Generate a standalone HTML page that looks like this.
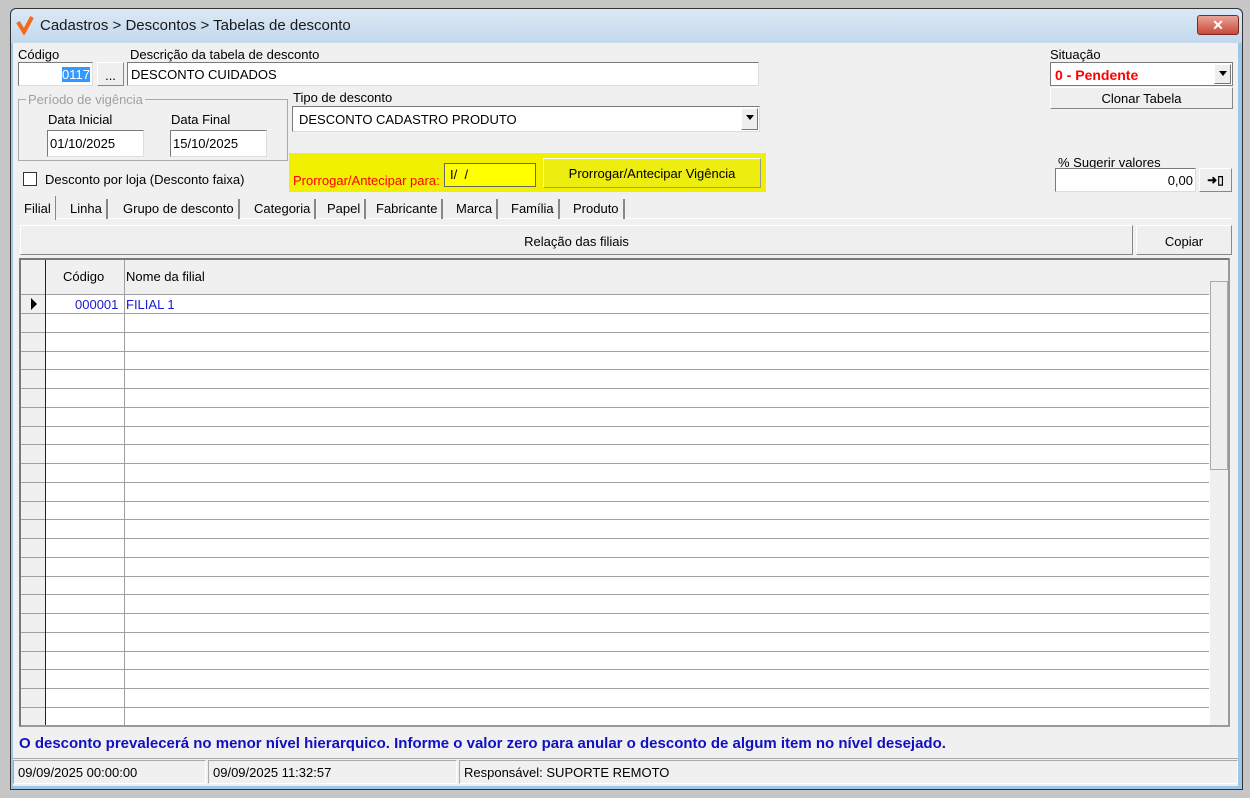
<!DOCTYPE html>
<html><head><meta charset="utf-8"><style>
*{box-sizing:border-box;margin:0;padding:0}
body{width:1250px;height:798px;background:#c6c6c6;font-family:"Liberation Sans",sans-serif;font-size:13px;color:#000;position:relative;overflow:hidden}
.a{position:absolute}
.inp{position:absolute;background:#fff;border:1px solid #7a7a7a;border-right-color:#ddd;border-bottom-color:#ddd;white-space:nowrap;overflow:hidden}
.btn{position:absolute;background:#efefef;border:1px solid #fff;border-right-color:#888;border-bottom-color:#888;text-align:center}
.lbl{position:absolute;white-space:nowrap}
.dd{position:absolute;right:1px;top:1px;bottom:1px;width:17px;background:#eee;border:1px solid #fff;border-right-color:#777;border-bottom-color:#777}
.dd:after{content:"";position:absolute;left:4px;top:6px;border-left:4px solid transparent;border-right:4px solid transparent;border-top:5px solid #000}
.tab{position:absolute;top:199px;height:20px;border-right:2px solid #888;padding:2px 4px;white-space:nowrap}
</style></head><body>
<div class="a" style="left:10px;top:8px;width:1233px;height:782px;background:#9cc8e8;border:1px solid #333;border-radius:6px 6px 0 0"></div>
<div class="a" style="left:11px;top:9px;width:1231px;height:34px;background:linear-gradient(#dbe9f6,#c3d8ec);border-radius:6px 6px 0 0"></div>
<svg class="a" style="left:16px;top:15px" width="20" height="20"><path d="M2 7 L8 17 L16 2" stroke="#f26a1b" stroke-width="4" fill="none"/></svg>
<div class="lbl" style="left:40px;top:17px;font-size:15px;color:#1a1a1a">Cadastros &gt; Descontos &gt; Tabelas de desconto</div>
<div class="a" style="left:1197px;top:15px;width:42px;height:20px;background:linear-gradient(#e9a597,#c9493a);border:1px solid #7a2b22;border-radius:3px;color:#fff;font-weight:bold;text-align:center;font-size:14px;line-height:18px">✕</div>
<div class="a" style="left:13px;top:43px;width:1225px;height:743px;background:#f0f0f0"></div>

<div class="lbl" style="left:18px;top:47px">Código</div>
<div class="inp" style="left:18px;top:62px;width:75px;height:24px;text-align:right;padding:4px 2px"><span style="background:#3399ff;color:#fff">0117</span></div>
<div class="btn" style="left:97px;top:62px;width:27px;height:24px;padding-top:5px">...</div>
<div class="lbl" style="left:130px;top:47px">Descrição da tabela de desconto</div>
<div class="inp" style="left:127px;top:62px;width:632px;height:24px;padding:4px 3px">DESCONTO CUIDADOS</div>

<div class="a" style="left:18px;top:99px;width:270px;height:62px;border:1px solid #aaa"></div>
<div class="lbl" style="left:26px;top:92px;background:#f0f0f0;color:#a0a0a0;padding:0 2px">Período de vigência</div>
<div class="lbl" style="left:48px;top:112px">Data Inicial</div>
<div class="inp" style="left:47px;top:130px;width:97px;height:27px;padding:5px 2px">01/10/2025</div>
<div class="lbl" style="left:171px;top:112px">Data Final</div>
<div class="inp" style="left:170px;top:130px;width:97px;height:27px;padding:5px 2px">15/10/2025</div>

<div class="lbl" style="left:293px;top:90px">Tipo de desconto</div>
<div class="inp" style="left:292px;top:106px;width:468px;height:26px;padding:5px 6px">DESCONTO CADASTRO PRODUTO<div class="dd"></div></div>

<div class="a" style="left:289px;top:153px;width:477px;height:39px;background:#f0f000"></div>
<div class="lbl" style="left:293px;top:173px;color:#f00">Prorrogar/Antecipar para:</div>
<div class="a" style="left:444px;top:163px;width:92px;height:24px;background:#ff0;border:1px solid #666;padding:3px 5px">I/&nbsp; /</div>
<div class="a" style="left:543px;top:158px;width:218px;height:30px;background:#eded10;border:1px solid #fff;border-right-color:#999;border-bottom-color:#999;text-align:center;padding-top:7px">Prorrogar/Antecipar Vigência</div>

<div class="a" style="left:23px;top:172px;width:14px;height:14px;background:#fff;border:1px solid #333"></div>
<div class="lbl" style="left:45px;top:172px">Desconto por loja (Desconto faixa)</div>

<div class="lbl" style="left:1050px;top:47px">Situação</div>
<div class="inp" style="left:1050px;top:62px;width:183px;height:24px;padding:4px 4px;color:#f00;font-weight:bold;font-size:14px;border-color:#7a7a7a">0 - Pendente<div class="dd"></div></div>
<div class="btn" style="left:1050px;top:87px;width:183px;height:22px;padding-top:3px">Clonar Tabela</div>
<div class="lbl" style="left:1058px;top:155px">% Sugerir valores</div>
<div class="inp" style="left:1055px;top:168px;width:141px;height:24px;text-align:right;padding:4px 2px">0,00</div>
<div class="btn" style="left:1199px;top:168px;width:33px;height:24px;font-size:12px;font-weight:bold;padding-top:4px">➜▯</div>

<div class="a" style="left:20px;top:218px;width:1212px;height:1px;background:#fff"></div>
<div class="tab" style="left:20px;top:196px;height:24px;background:#f0f0f0;border-right:1px solid #888;padding-top:5px">Filial</div>
<div class="tab" style="left:66px">Linha</div>
<div class="tab" style="left:119px">Grupo de desconto</div>
<div class="tab" style="left:250px">Categoria</div>
<div class="tab" style="left:323px">Papel</div>
<div class="tab" style="left:372px">Fabricante</div>
<div class="tab" style="left:452px">Marca</div>
<div class="tab" style="left:507px">Família</div>
<div class="tab" style="left:569px">Produto</div>

<div class="btn" style="left:20px;top:225px;width:1113px;height:30px;padding-top:8px">Relação das filiais</div>
<div class="btn" style="left:1136px;top:225px;width:96px;height:30px;padding-top:8px">Copiar</div>

<div class="a" style="left:19px;top:258px;width:1211px;height:469px;border:2px solid #777;border-right-color:#999;border-bottom-color:#999;background:#fff;overflow:hidden">
<svg width="1207" height="465" style="position:absolute;left:0;top:0">
<rect x="0" y="0" width="1207" height="34" fill="#f0f0f0"/>
<rect x="0" y="0" width="24" height="465" fill="#f0f0f0"/>
<g stroke="#a0a0a0" stroke-width="1">
<line x1="0" y1="34.5" x2="1188" y2="34.5"/>
<line x1="0" y1="53.5" x2="1188" y2="53.5"/><line x1="0" y1="72.5" x2="1188" y2="72.5"/><line x1="0" y1="91.5" x2="1188" y2="91.5"/><line x1="0" y1="109.5" x2="1188" y2="109.5"/><line x1="0" y1="128.5" x2="1188" y2="128.5"/><line x1="0" y1="147.5" x2="1188" y2="147.5"/><line x1="0" y1="166.5" x2="1188" y2="166.5"/><line x1="0" y1="184.5" x2="1188" y2="184.5"/><line x1="0" y1="203.5" x2="1188" y2="203.5"/><line x1="0" y1="222.5" x2="1188" y2="222.5"/><line x1="0" y1="241.5" x2="1188" y2="241.5"/><line x1="0" y1="259.5" x2="1188" y2="259.5"/><line x1="0" y1="278.5" x2="1188" y2="278.5"/><line x1="0" y1="297.5" x2="1188" y2="297.5"/><line x1="0" y1="316.5" x2="1188" y2="316.5"/><line x1="0" y1="334.5" x2="1188" y2="334.5"/><line x1="0" y1="353.5" x2="1188" y2="353.5"/><line x1="0" y1="372.5" x2="1188" y2="372.5"/><line x1="0" y1="391.5" x2="1188" y2="391.5"/><line x1="0" y1="409.5" x2="1188" y2="409.5"/><line x1="0" y1="428.5" x2="1188" y2="428.5"/><line x1="0" y1="447.5" x2="1188" y2="447.5"/>
<line x1="103.5" y1="0" x2="103.5" y2="465"/>
</g>
<line x1="24.5" y1="0" x2="24.5" y2="465" stroke="#222"/>
<path d="M10 38 L16 44 L10 50 Z" fill="#000"/>
<rect x="1189" y="0" width="18" height="465" fill="#f0f0f0"/>
<rect x="1189.5" y="21.5" width="17" height="188" fill="#eee" stroke="#aaa"/>
</svg>
<div class="lbl" style="left:42px;top:9px">Código</div>
<div class="lbl" style="left:105px;top:9px">Nome da filial</div>
<div class="lbl" style="left:54px;top:37px;color:#1a1ad0">000001</div>
<div class="lbl" style="left:105px;top:37px;color:#1a1ad0">FILIAL 1</div>
</div>

<div class="lbl" style="left:19px;top:735px;color:#1010c0;font-weight:bold;font-size:15px">O desconto prevalecerá no menor nível hierarquico. Informe o valor zero para anular o desconto de algum item no nível desejado.</div>
<div class="a" style="left:13px;top:758px;width:1225px;height:1px;background:#aaa"></div>
<div class="a" style="left:13px;top:760px;width:193px;height:24px;border:1px solid #aaa;border-right-color:#fff;border-bottom-color:#fff;padding:4px 4px">09/09/2025 00:00:00</div>
<div class="a" style="left:208px;top:760px;width:249px;height:24px;border:1px solid #aaa;border-right-color:#fff;border-bottom-color:#fff;padding:4px 4px">09/09/2025 11:32:57</div>
<div class="a" style="left:459px;top:760px;width:779px;height:24px;border:1px solid #aaa;border-right-color:#fff;border-bottom-color:#fff;padding:4px 4px">Responsável: SUPORTE REMOTO</div>
</body></html>
